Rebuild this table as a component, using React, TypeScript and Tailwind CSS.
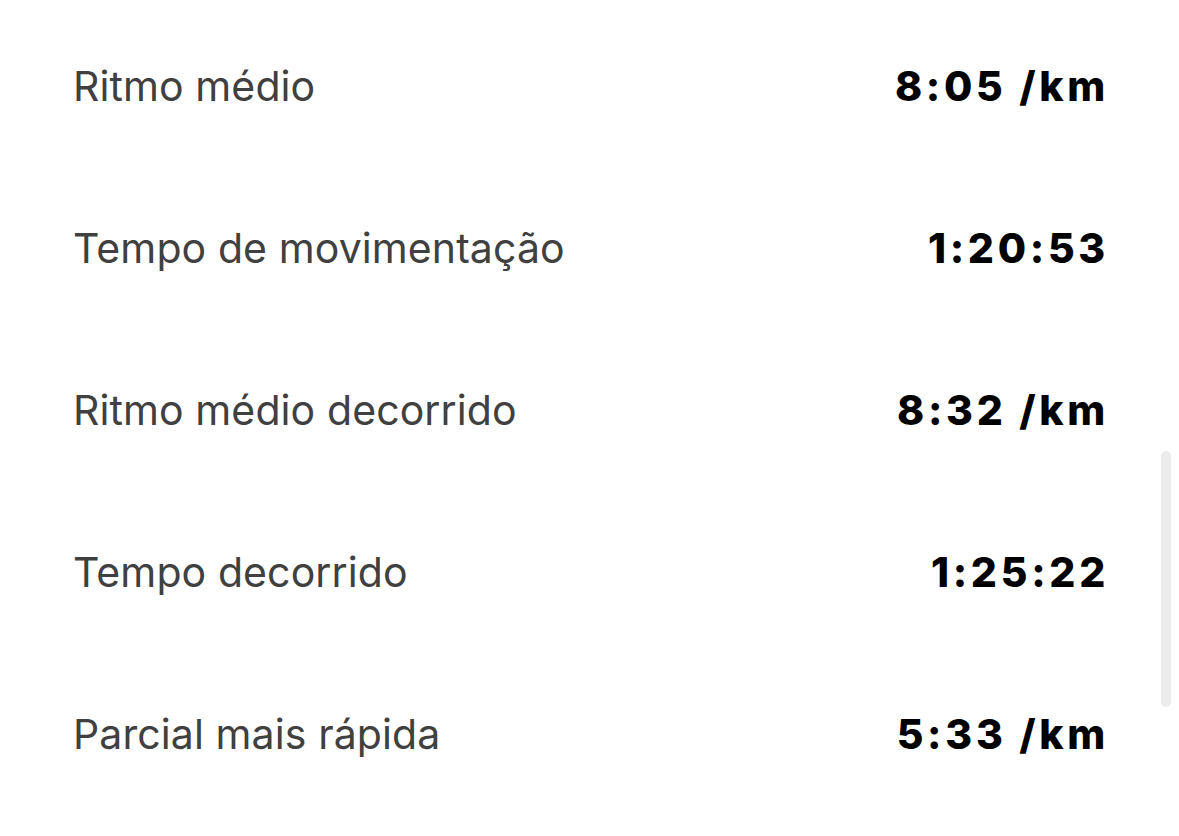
import React from "react";

const rows: [string, string][] = [
  ["Ritmo médio", "8:05 /km"],
  ["Tempo de movimentação", "1:20:53"],
  ["Ritmo médio decorrido", "8:32 /km"],
  ["Tempo decorrido", "1:25:22"],
  ["Parcial mais rápida", "5:33 /km"],
];

export default function App() {
  return (
    <div
      className="relative w-[1179px] h-[836px] bg-white overflow-hidden"
      style={{ fontFamily: "Inter, 'Noto Sans', sans-serif" }}
    >
      <div className="flex flex-col pt-[6px] pl-[73px] pr-[74px]">
        {rows.map(([label, value]) => (
          <div key={label} className="flex h-[162px] items-center justify-between">
            <span className="text-[41px] text-[#404040] tracking-[0.1px]">{label}</span>
            <span className="text-[41px] font-extrabold text-black tracking-[3.7px] mr-[-4px]">{value}</span>
          </div>
        ))}
      </div>
      <div className="absolute left-[1161px] top-[451px] w-[10px] h-[256px] rounded-full bg-[#ececec]" />
    </div>
  );
}
